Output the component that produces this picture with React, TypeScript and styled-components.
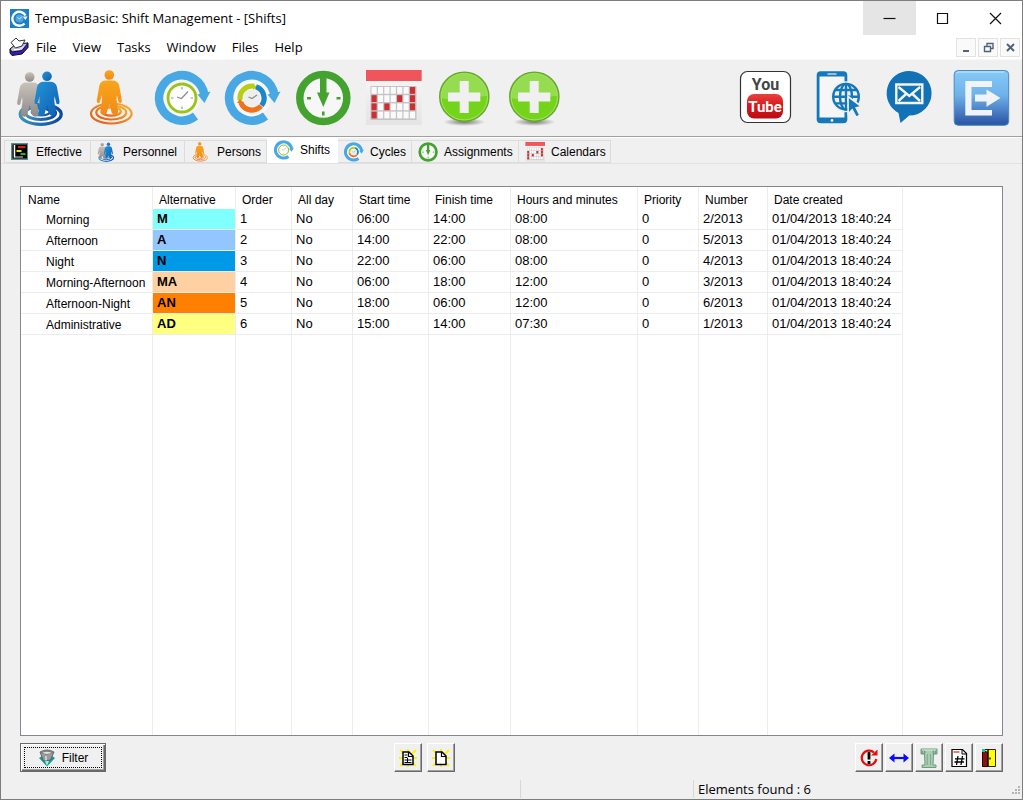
import React, { useState } from "react";
import styled, { createGlobalStyle, css } from "styled-components";

const UI = `"Open Sans", "Noto Sans", sans-serif`;
const CLASSIC = `"Liberation Sans", Arial, sans-serif`;
const FACE = "#f0f0f0";

const GlobalStyle = createGlobalStyle`
  *, *::before, *::after { box-sizing: border-box; }
  body { margin: 0; background: ${FACE}; color: #000; }
  button { margin: 0; padding: 0; border: 0; background: none; color: inherit; font: inherit; }
  svg { display: block; flex: none; }
`;

/* ---------- Drawings ---------- */

type IconProps = { size?: number };

/* Small copies are cropped closer so that they fill their slot. */
const Art = ({ size = 60, box, children }: IconProps & { box?: string; children: React.ReactNode }) => (
  <svg width={size} height={size} viewBox={box ?? (size < 60 ? "3 2 56 56" : "0 0 60 60")} fill="none" aria-hidden="true">
    {children}
  </svg>
);

const BODY =
  "M-3 5.5h6Q9 5.500 10 11L12.500 25q.2 4-3 2.500L7.600 20 7.200 24 9 38Q5 41.500 2.500 38L0 28-2.500 38Q-5 41.500-9 38L-7.200 24-7.600 20-9.500 27.500q-3.200 1.500-3-2.500L-10 11Q-9 5.500-3 5.500z";

const Person = ({ x, y, fill }: { x: number; y: number; fill: string }) => (
  <g transform={`translate(${x} ${y})`} fill={fill}>
    <circle r="4.800" />
    <path d={BODY} />
  </g>
);

const PeopleIcon = ({ size }: IconProps) => (
  <Art size={size}>
    <defs>
      <linearGradient id="rippleBlue" x1="0" x2="1">
        <stop offset="0" stopColor="#3f93b8" />
        <stop offset="1" stopColor="#0b46a0" />
      </linearGradient>
      <linearGradient id="bodyBlue" x1="0" x2="1" y2="1">
        <stop offset="0" stopColor="#2494d6" />
        <stop offset="1" stopColor="#0d5fb4" />
      </linearGradient>
      <linearGradient id="bodyGrey" x1="0" x2="0" y2="1">
        <stop offset="0" stopColor="#c9c2bb" />
        <stop offset="1" stopColor="#8f8a88" />
      </linearGradient>
    </defs>
    <ellipse cx="28.700" cy="46.300" rx="20.500" ry="10" fill="#fff" stroke="url(#rippleBlue)" strokeWidth="3.200" />
    <ellipse cx="28.700" cy="45" rx="15" ry="6.500" stroke="url(#rippleBlue)" strokeWidth="2.800" />
    <ellipse cx="28.700" cy="44" rx="9" ry="3.500" stroke="url(#rippleBlue)" strokeWidth="2.200" />
    <Person x={17.7} y={9} fill="url(#bodyGrey)" />
    <Person x={35} y={8.3} fill="url(#bodyBlue)" />
  </Art>
);

const PersonIcon = ({ size }: IconProps) => (
  <Art size={size}>
    <defs>
      <linearGradient id="rippleOrange" x1="0" x2="1" y1="1" y2="0">
        <stop offset="0" stopColor="#e0571c" />
        <stop offset="1" stopColor="#f9b233" />
      </linearGradient>
      <linearGradient id="bodyOrange" x1="0" x2="0" y2="1">
        <stop offset="0" stopColor="#f9a51c" />
        <stop offset="1" stopColor="#f08a18" />
      </linearGradient>
    </defs>
    <ellipse cx="29.300" cy="45.500" rx="20.300" ry="10" fill="#fbf3ea" stroke="url(#rippleOrange)" strokeWidth="2.200" />
    <ellipse cx="29.300" cy="44.500" rx="15" ry="7" stroke="url(#rippleOrange)" strokeWidth="2.200" />
    <ellipse cx="29.300" cy="43.500" rx="9.500" ry="4.200" stroke="url(#rippleOrange)" strokeWidth="2.200" />
    <Person x={27.3} y={7} fill="url(#bodyOrange)" />
  </Art>
);

const SweepArrow = () => (
  <>
    <path d="M43.500 48A22.700 22.700 0 1 1 52.300 27" stroke="#48a8e4" strokeWidth="8.500" />
    <path d="M45.500 26.500L58.500 23.500 52.500 35z" fill="#48a8e4" />
  </>
);

const ShiftIcon = ({ size }: IconProps) => (
  <Art size={size}>
    <circle cx="30" cy="30" r="18.500" fill="#f7f7f7" />
    <SweepArrow />
    <circle cx="30" cy="30" r="14" fill="#fff" stroke="#9bc31a" strokeWidth="2.800" />
    <path d="M36 23.500l-6.500 7-4.500-1.500" stroke="#8c8c8c" strokeWidth="1.300" />
    <path d="M30 19v2.500M30 38.500V41M19 30h2.500M38.500 30H41" stroke="#999" strokeWidth="1.200" />
  </Art>
);

const CycleIcon = ({ size }: IconProps) => (
  <Art size={size}>
    <circle cx="30" cy="30" r="18.500" fill="#f9f9f9" />
    <SweepArrow />
    <path d="M18.200 32A12 12 0 0 1 32 18.200" stroke="#b6cf16" strokeWidth="5.200" />
    <path d="M31 15.500l4 3.500-4 3z" fill="#b6cf16" />
    <path d="M34 18.700A12 12 0 0 1 39.500 37.500" stroke="#1c86c8" strokeWidth="5.200" />
    <path d="M39 37.900A12 12 0 0 1 18.800 34.500" stroke="#f0711e" strokeWidth="5.200" />
    <path d="M15 35l3-4 4 4z" fill="#f0711e" />
    <circle cx="30" cy="30" r="8.500" fill="#eee" />
    <path d="M35 27l-5 3.500-3.500-1.500" stroke="#8c8c8c" strokeWidth="1.200" />
  </Art>
);

const AssignmentIcon = ({ size }: IconProps) => (
  <Art size={size}>
    <circle cx="31.300" cy="30" r="23.500" fill="#f7f7f7" stroke="#43a32e" strokeWidth="7.500" />
    <path d="M28 5h6.500v19.500H37.500L31.300 39 25 24.500H28z" fill="#43a32e" />
    <path d="M15 30.300h4M44.500 30.300h4M31.300 43.500v4" stroke="#43a32e" strokeWidth="2.600" />
  </Art>
);

const BUSY = ["6-0", "0-1", "4-1", "6-1", "0-2", "2-2", "6-2", "0-3"];

const CalendarIcon = ({ size }: IconProps) => (
  <Art size={size}>
    <defs>
      <linearGradient id="sheet" x1="0" x2="0" y2="1">
        <stop offset="0" stopColor="#f8f8f8" />
        <stop offset="1" stopColor="#e4e4e4" />
      </linearGradient>
    </defs>
    <path d="M4 2h55.700v55H4z" fill="url(#sheet)" />
    <path d="M4 2h55.700v11H4z" fill="#f0555c" />
    <path d="M8.500 18h46v34H8.500z" fill="#c3c3c3" />
    {Array.from({ length: 28 }, (_, i) => {
      const col = i % 7;
      const row = Math.floor(i / 7);
      return (
        <rect
          key={i}
          x={9.5 + col * 6.4}
          y={19 + row * 8.2}
          width="5.200"
          height="6.800"
          fill={BUSY.includes(`${col}-${row}`) ? "#cf2f33" : "#fafafa"}
        />
      );
    })}
  </Art>
);

const AddIcon = ({ size }: IconProps) => (
  <Art size={size}>
    <defs>
      <radialGradient id="addShadow">
        <stop offset="0" stopColor="#777" />
        <stop offset="1" stopColor="#777" stopOpacity="0" />
      </radialGradient>
    </defs>
    <ellipse cx="32.300" cy="54" rx="21" ry="4" fill="url(#addShadow)" />
    <circle cx="32.300" cy="28.700" r="24.600" fill="#74d41c" stroke="#6aa534" strokeWidth="1.400" />
    <path d="M9 30A23.300 23.300 0 0 1 55.600 28Q46 28 38 31.500T9 30z" fill="#95dc50" />
    <circle cx="32.300" cy="28.700" r="23.200" stroke="#a3e463" strokeWidth="1" />
    <path d="M27.700 13h9v11.500h11.600v9H36.700V45h-9V33.500H16v-9h11.700z" fill="#f0f0f0" />
  </Art>
);

const LogoText = styled.text`
  font-family: Roboto, "Liberation Sans", sans-serif;
  font-weight: 700;
  text-anchor: middle;
`;

const YouTubeIcon = ({ size }: IconProps) => (
  <Art size={size}>
    <defs>
      <linearGradient id="tube" x1="0" x2="0" y2="1">
        <stop offset="0" stopColor="#e8423f" />
        <stop offset=".5" stopColor="#d8161a" />
        <stop offset="1" stopColor="#b80d12" />
      </linearGradient>
    </defs>
    <rect x="5.500" y="3.500" width="50" height="51" rx="7" fill="#fff" stroke="#333" strokeWidth="1.200" />
    <rect x="12" y="26" width="36" height="24.500" rx="7" fill="url(#tube)" />
    <LogoText x="30.500" y="22" fontSize="16" fill="#444">You</LogoText>
    <LogoText x="30" y="44" fontSize="15" fill="#fff">Tube</LogoText>
  </Art>
);

const MobileIcon = ({ size }: IconProps) => (
  <Art size={size}>
    <rect x="9.700" y="3.300" width="30.600" height="52" rx="4" fill="#1478bb" />
    <path d="M12.500 8.500h25v41h-25z" fill="#f6f6f6" />
    <path d="M20.500 6h9" stroke="#f0f0f0" strokeWidth="1.200" />
    <circle cx="25" cy="52.500" r="1.400" fill="#f0f0f0" />
    <circle cx="39" cy="28.700" r="15.500" fill="#f0f0f0" />
    <g stroke="#1478bb" strokeWidth="2.400">
      <circle cx="39" cy="28.700" r="12.800" />
      <ellipse cx="39" cy="28.700" rx="6" ry="12.800" />
      <path d="M39 16v25M26 28.700h26M28.500 22h21M28.500 35.400h21" />
    </g>
    <path d="M41 28.500l13.500 10-5.300 1.300 3.800 7.500-3.800 2-4-7.500-4 4z" fill="#1478bb" stroke="#f0f0f0" strokeWidth="1.600" />
  </Art>
);

const MailIcon = ({ size }: IconProps) => (
  <Art size={size}>
    <path d="M30.300 3a22.300 22.300 0 1 1 0 44.600L21.500 55 19.500 45A22.300 22.300 0 0 1 30.300 3z" fill="#1172b6" />
    <path d="M17.300 16.500h26v18.500h-26z" stroke="#f4f4f4" strokeWidth="2.400" />
    <path d="M19.500 19l10.800 9 10.800-9M19.500 33l7.500-7M41 33l-7.500-7" stroke="#f4f4f4" strokeWidth="2.400" />
  </Art>
);

const ExitIcon = ({ size }: IconProps) => (
  <Art size={size}>
    <defs>
      <linearGradient id="exitFill" x1="0" x2="0" y2="1">
        <stop offset="0" stopColor="#86caf8" />
        <stop offset=".45" stopColor="#6fb2ea" />
        <stop offset="1" stopColor="#2a51a3" />
      </linearGradient>
    </defs>
    <rect x="3.200" y="2.500" width="54.500" height="54.800" rx="4" fill="url(#exitFill)" stroke="#4a87c4" strokeWidth="1" />
    <path d="M5.500 5.500Q5.500 4 8 4h45" stroke="#c6e6fb" strokeWidth="1" />
    <path d="M14.300 13H41v6H20.500v23H41v5.500H14.300z" fill="#f0f3f8" />
    <path d="M24 26.500h11.500v-5L49.500 30l-14 8.700v-5.200H24z" fill="#f0f3f8" />
  </Art>
);

const EffectiveIcon = ({ size }: IconProps) => (
  <Art size={size} box="0 0 20 20">
    <path d="M1 1h17v17H1z" fill="#5d8a8a" />
    <path d="M2.500 2.500H17v14H2.500z" fill="#000" />
    <path d="M4.500 3v12.500" stroke="#fff" strokeWidth="1.500" />
    <path d="M8 5h7.500" stroke="#e01818" strokeWidth="2" />
    <path d="M6.500 9h5" stroke="#e8e020" strokeWidth="2" />
    <path d="M10.500 12h5" stroke="#20b040" strokeWidth="2" />
    <path d="M4 15h9" stroke="#ddd" strokeWidth="1" />
  </Art>
);

const AppLogo = () => (
  <Art size={19} box="0 0 19 19">
    <path d="M0 0h19v19H0z" fill="#1a7fc6" />
    <path d="M14.500 14.500A7 7 0 1 1 15.500 6.500" stroke="#fff" strokeWidth="2.400" />
    <path d="M12.500 7.500h5l-2 3.500z" fill="#fff" />
    <circle cx="9.500" cy="9.500" r="4" fill="#4fa6dc" />
    <path d="M7.500 8.500l2 1.500 2.500-2.500" stroke="#d4ecfa" />
  </Art>
);

const DocumentLogo = () => (
  <Art size={20} box="0 0 20 20">
    <path d="M1 12l8-3 10-3v4.500L13 17 3 18.500 1 16z" fill="#3a1cc0" stroke="#111" />
    <path d="M1 12l6-5 12-1-6 7.500L3 15z" fill="#b9c4e6" stroke="#111" />
    <path d="M2 5.500L7 1l3 3 6-1-3 6-6.500 2z" fill="#fff" stroke="#333" />
    <path d="M5 12.500h6l3-3" stroke="#fff" />
  </Art>
);

const FilterIcon = () => (
  <Art size={18} box="0 0 18 18">
    <path d="M1 9l8 8.500L17 9l-3-2H4z" fill="#149a9a" />
    <path d="M7 12h4l-2 5z" fill="#9df0e8" />
    <path d="M2 3q7-4 14 0l-3.500 8-7 1z" fill="#9b9b9b" stroke="#555" strokeWidth=".8" />
    <path d="M3 4q6-3.500 12 0-6 3-12 0z" fill="#e2e2e2" stroke="#666" strokeWidth=".7" />
    <path d="M8 7v4.500" stroke="#ddd" strokeWidth="1.500" />
  </Art>
);

const NewIcon = ({ lined }: { lined?: boolean }) => (
  <Art size={20} box="0 0 20 20">
    <path d="M2 2l16 16M18 2L2 18M10 1v18M1 10h18" stroke="#fff200" strokeWidth="2" />
    <path d="M5 4h6l4 4v8.500H5z" fill="#fff" stroke="#000" strokeWidth="1.500" />
    <path d="M10.500 4v4.500H15" stroke="#000" strokeWidth="1.200" />
    {lined && <path d="M6.500 7h3M6.500 9.500h3M6.500 12h7M6.500 14.500h7M9.500 10v4" stroke="#000" />}
  </Art>
);

const RefreshIcon = () => (
  <Art size={20} box="0 0 20 20">
    <path d="M15 4.500A7.300 7.300 0 1 0 17.300 11" stroke="#e80c0c" strokeWidth="2.200" />
    <path d="M12 7.500h6.500V1.500z" fill="#e80c0c" />
    <path d="M10 4v7.500M10 13v3" stroke="#000" strokeWidth="2.800" />
  </Art>
);

const ResizeIcon = () => (
  <Art size={20} box="0 0 20 20">
    <path d="M3 10h14" stroke="#0a0aff" strokeWidth="2.200" />
    <path d="M0 10l5.500-4.500v9zM20 10l-5.500-4.500v9z" fill="#0a0aff" />
  </Art>
);

const ColumnIcon = () => (
  <Art size={20} box="0 0 20 20">
    <path d="M2 1h16v5h-3.500L14 17h3v2.500H3V17h3L5.500 6H2z" fill="#a9cdb2" stroke="#6f9a7c" />
    <path d="M8.300 6v11M11.500 6v11" stroke="#7fab8b" />
    <circle cx="4.500" cy="4" r="1.500" stroke="#5e8a6b" />
    <circle cx="15.500" cy="4" r="1.500" stroke="#5e8a6b" />
    <path d="M3 2h14" stroke="#d9eedd" />
  </Art>
);

const NumberIcon = () => (
  <Art size={20} box="0 0 20 20">
    <path d="M3 1.500h10.500l4 4v13H3z" fill="#fff" stroke="#000" strokeWidth="1.200" />
    <path d="M13 1.500V6h4.500" stroke="#000" />
    <path d="M4.500 4h6" stroke="#e02020" strokeWidth="1.200" />
    <path d="M9 8L7.500 17M13.500 8L12 17M6 10.800h9.500M5.500 14h9.500" stroke="#000" strokeWidth="1.300" />
  </Art>
);

const DoorIcon = () => (
  <Art size={20} box="0 0 20 20">
    <path d="M3.500 1.500h13v17h-13z" fill="#ff0" stroke="#222" />
    <path d="M3.500 1.500l5 3v14h-5z" fill="#8c1010" stroke="#300" />
    <path d="M9 2v16.500" stroke="#000" strokeWidth="1.500" />
    <path d="M11 9.500v2" stroke="#222" strokeWidth="1.500" />
    <path d="M3 1h3v3H3z" fill="#17c4c4" />
  </Art>
);

const CaptionGlyph = ({ kind }: { kind: "min" | "max" | "close" }) => (
  <svg width="13" height="13" viewBox="0 0 13 13" fill="none" stroke="#111" strokeWidth="1.200" aria-hidden="true">
    {kind === "min" && <path d="M.5 6.500h12" />}
    {kind === "max" && <path d="M1.500 1.500h10v10h-10z" />}
    {kind === "close" && <path d="M1 1l11 11M12 1L1 12" />}
  </svg>
);

const MdiGlyph = ({ kind }: { kind: "min" | "restore" | "close" }) => (
  <svg width="11" height="11" viewBox="0 0 11 11" fill="none" stroke="#4f6478" strokeWidth="1.400" aria-hidden="true">
    {kind === "min" && <path d="M2 9h6" strokeWidth="2" />}
    {kind === "restore" && <path d="M4 4V1.500h6v5H7.500M1.500 4.500h6v5h-6z" />}
    {kind === "close" && <path d="M2 2l7 7M9 2L2 9" strokeWidth="2" />}
  </svg>
);

const SizeGrip = () => (
  <svg width="12" height="16" viewBox="0 0 12 16" fill="#b4b4b4" aria-hidden="true">
    <path d="M8 5h2v2H8zM5 8h2v2H5zM8 8h2v2H8zM2 11h2v2H2zM5 11h2v2H5zM8 11h2v2H8z" />
  </svg>
);

/* ---------- Window frame ---------- */

const Window = styled.div`
  display: flex;
  flex-direction: column;
  min-height: 100vh;
  border: 1px solid #7d7d7d;
  background: ${FACE};
  font: 12px/16px ${CLASSIC};
`;

const TitleBar = styled.header`
  display: flex;
  align-items: center;
  height: 34px;
  padding-left: 9px;
  gap: 6px;
  background: #fff;
`;

const Title = styled.h1`
  flex: 1;
  margin: 0;
  font: 400 13px/18px ${UI};
  white-space: nowrap;
`;

const CaptionButtons = styled.div`
  display: flex;
`;

const CaptionButton = styled.button<{ $lit?: boolean }>`
  display: flex;
  align-items: center;
  justify-content: center;
  width: 53px;
  height: 34px;
  background: ${(p) => (p.$lit ? "#e5e5e5" : "transparent")};
`;

const MenuBar = styled.nav`
  display: flex;
  align-items: center;
  height: 24px;
  padding: 0 2px 0 8px;
  background: #fff;
  font: 13px/18px ${UI};
`;

const MenuItems = styled.div`
  display: flex;
  flex: 1;
  gap: 16px;
  padding-left: 7px;
`;

const MdiButtons = styled.div`
  display: flex;
  gap: 2px;
`;

const MdiButton = styled.button`
  display: flex;
  align-items: center;
  justify-content: center;
  width: 20px;
  height: 19px;
  border: 1px solid #e2e2e2;
  background: #fafafa;
`;

/* ---------- Tool bar ---------- */

const ToolBar = styled.div`
  display: flex;
  justify-content: space-between;
  height: 78px;
  padding: 8px 5px 0 6px;
  border-top: 1px solid #f8f8f8;
  border-bottom: 1px solid #a0a0a0;
`;

const ToolGroup = styled.div`
  display: flex;
`;

const ToolButton = styled.button<{ $wide?: boolean }>`
  display: flex;
  justify-content: center;
  align-items: flex-start;
  width: ${(p) => (p.$wide ? 72 : 70)}px;
`;

/* ---------- Tabs ---------- */

const TabList = styled.div`
  display: flex;
  align-items: flex-end;
  height: 27px;
  padding-left: 3px;
  border-top: 1px solid #fff;
  border-bottom: 1px solid #e2e2e2;
`;

const Tab = styled.button<{ $width: number; $active: boolean }>`
  display: flex;
  align-items: center;
  gap: 6px;
  width: ${(p) => p.$width}px;
  height: 23px;
  padding-left: 6px;
  border: 1px solid #dcdcdc;
  border-left-width: 0;
  white-space: nowrap;
  &:first-child { border-left-width: 1px; padding-left: 5px; }
  ${(p) =>
    p.$active &&
    css`
      height: 26px;
      padding-left: 7px;
      padding-bottom: 1px;
      border-color: #fff;
      background: #fff;
    `}
`;

/* ---------- List ---------- */

const Content = styled.main`
  display: flex;
  flex: 1;
  flex-direction: column;
  padding: 22px 19px 0;
`;

const ListPanel = styled.div`
  display: flex;
  flex: 1;
  overflow-x: auto;
  border: 1px solid #828790;
  background: #fff;
`;

const ListTable = styled.table`
  flex: none;
  width: 882px;
  table-layout: fixed;
  border-collapse: separate;
  border-spacing: 0;
`;

const HeadCell = styled.th`
  height: 22px;
  padding: 3px 0 0 6px;
  border-right: 1px solid #ececec;
  font-weight: 400;
  text-align: left;
  white-space: nowrap;
  &:first-child { padding-left: 7px; }
`;

const Cell = styled.td<{ $fill?: string }>`
  height: 21px;
  padding: 0 0 0 4px;
  border-right: 1px solid #ececec;
  border-bottom: 1px solid #ececec;
  background: ${(p) => p.$fill ?? "transparent"};
  font-size: 13px;
  font-weight: ${(p) => (p.$fill ? 700 : 400)};
  white-space: nowrap;
`;

const NameCell = styled(Cell)`
  padding: 2px 0 0 25px;
  font-size: 12px;
`;

const FillerCell = styled.td`
  padding: 0;
  border-right: 1px solid #ececec;
`;

/* ---------- Bottom bars ---------- */

const ActionBar = styled.div`
  display: grid;
  grid-template-columns: 374px auto 1fr;
  align-items: center;
  height: 43px;
`;

const ActionGroup = styled.div<{ $gap: number; $end?: boolean }>`
  display: flex;
  gap: ${(p) => p.$gap}px;
  justify-content: ${(p) => (p.$end ? "flex-end" : "flex-start")};
`;

const RaisedButton = styled.button`
  display: flex;
  align-items: center;
  justify-content: center;
  width: 28px;
  height: 29px;
  border: 1px solid;
  border-color: #fff #696969 #696969 #fff;
  box-shadow: inset -1px -1px #a0a0a0;
`;

const FilterButton = styled(RaisedButton)`
  width: 86px;
  padding: 3px;
  border-color: #696969;
  box-shadow: inset 1px 1px #fff, inset -1px -1px #696969, inset -2px -2px #a0a0a0;
`;

const FocusFrame = styled.span`
  display: flex;
  flex: 1;
  align-items: center;
  justify-content: center;
  gap: 6px;
  height: 21px;
  border: 1px dotted #000;
`;

const StatusBar = styled.footer`
  display: grid;
  grid-template-columns: 519px 173px 1fr auto;
  align-items: center;
  height: 20px;
  font: 13px/18px ${UI};
`;

const StatusPane = styled.div`
  height: 18px;
  padding-left: 4px;
  border-left: 1px solid #d7d7d7;
  &:first-child { border-left: 0; }
`;

/* ---------- Data ---------- */

const MENUS = ["File", "View", "Tasks", "Window", "Files", "Help"];

const TOOLS = [
  { label: "Personnel", Icon: PeopleIcon },
  { label: "Persons", Icon: PersonIcon },
  { label: "Shifts", Icon: ShiftIcon },
  { label: "Cycles", Icon: CycleIcon },
  { label: "Assignments", Icon: AssignmentIcon },
  { label: "Calendars", Icon: CalendarIcon },
  { label: "Add shift", Icon: AddIcon },
  { label: "Add cycle", Icon: AddIcon },
];

const LINKS = [
  { label: "YouTube", Icon: YouTubeIcon },
  { label: "Mobile", Icon: MobileIcon },
  { label: "Contact", Icon: MailIcon },
  { label: "Exit", Icon: ExitIcon },
];

const TABS = [
  { label: "Effective", Icon: EffectiveIcon, width: 87 },
  { label: "Personnel", Icon: PeopleIcon, width: 94 },
  { label: "Persons", Icon: PersonIcon, width: 82 },
  { label: "Shifts", Icon: ShiftIcon, width: 71 },
  { label: "Cycles", Icon: CycleIcon, width: 74 },
  { label: "Assignments", Icon: AssignmentIcon, width: 107 },
  { label: "Calendars", Icon: CalendarIcon, width: 92 },
];

const COLUMNS = [
  { label: "Name", width: 132 },
  { label: "Alternative", width: 83 },
  { label: "Order", width: 56 },
  { label: "All day", width: 61 },
  { label: "Start time", width: 76 },
  { label: "Finish time", width: 82 },
  { label: "Hours and minutes", width: 127 },
  { label: "Priority", width: 61 },
  { label: "Number", width: 69 },
  { label: "Date created", width: 135 },
];

const SHIFTS = [
  { name: "Morning", code: "M", fill: "#80ffff", start: "06:00", finish: "14:00", hours: "08:00", number: "2/2013" },
  { name: "Afternoon", code: "A", fill: "#93c6ff", start: "14:00", finish: "22:00", hours: "08:00", number: "5/2013" },
  { name: "Night", code: "N", fill: "#0099e8", start: "22:00", finish: "06:00", hours: "08:00", number: "4/2013" },
  { name: "Morning-Afternoon", code: "MA", fill: "#ffd0a2", start: "06:00", finish: "18:00", hours: "12:00", number: "3/2013" },
  { name: "Afternoon-Night", code: "AN", fill: "#ff8000", start: "18:00", finish: "06:00", hours: "12:00", number: "6/2013" },
  { name: "Administrative", code: "AD", fill: "#ffff80", start: "15:00", finish: "14:00", hours: "07:30", number: "1/2013" },
];

const ACTIONS = [
  { label: "Refresh", Icon: RefreshIcon },
  { label: "Fit columns", Icon: ResizeIcon },
  { label: "Columns", Icon: ColumnIcon },
  { label: "Count", Icon: NumberIcon },
  { label: "Close", Icon: DoorIcon },
];

export default function App() {
  const [tab, setTab] = useState("Shifts");

  return (
    <>
      <GlobalStyle />
      <Window>
        <TitleBar>
          <AppLogo />
          <Title>TempusBasic: Shift Management - [Shifts]</Title>
          <CaptionButtons>
            <CaptionButton type="button" aria-label="Minimize" $lit><CaptionGlyph kind="min" /></CaptionButton>
            <CaptionButton type="button" aria-label="Maximize"><CaptionGlyph kind="max" /></CaptionButton>
            <CaptionButton type="button" aria-label="Close"><CaptionGlyph kind="close" /></CaptionButton>
          </CaptionButtons>
        </TitleBar>

        <MenuBar aria-label="Main menu">
          <DocumentLogo />
          <MenuItems>
            {MENUS.map((m) => (
              <button key={m} type="button">{m}</button>
            ))}
          </MenuItems>
          <MdiButtons>
            <MdiButton type="button" aria-label="Minimize document"><MdiGlyph kind="min" /></MdiButton>
            <MdiButton type="button" aria-label="Restore document"><MdiGlyph kind="restore" /></MdiButton>
            <MdiButton type="button" aria-label="Close document"><MdiGlyph kind="close" /></MdiButton>
          </MdiButtons>
        </MenuBar>

        <ToolBar role="toolbar" aria-label="Tools">
          <ToolGroup>
            {TOOLS.map(({ label, Icon }) => (
              <ToolButton key={label} type="button" aria-label={label}><Icon /></ToolButton>
            ))}
          </ToolGroup>
          <ToolGroup>
            {LINKS.map(({ label, Icon }) => (
              <ToolButton key={label} type="button" aria-label={label} $wide><Icon /></ToolButton>
            ))}
          </ToolGroup>
        </ToolBar>

        <TabList role="tablist">
          {TABS.map(({ label, Icon, width }) => (
            <Tab
              key={label}
              type="button"
              role="tab"
              aria-selected={tab === label}
              $active={tab === label}
              $width={width}
              onClick={() => setTab(label)}
            >
              <Icon size={20} />
              {label}
            </Tab>
          ))}
        </TabList>

        <Content>
          <ListPanel>
            <ListTable>
              <colgroup>
                {COLUMNS.map((c) => (
                  <col key={c.label} width={c.width} />
                ))}
              </colgroup>
              <thead>
                <tr>
                  {COLUMNS.map((c) => (
                    <HeadCell key={c.label} scope="col">{c.label}</HeadCell>
                  ))}
                </tr>
              </thead>
              <tbody>
                {SHIFTS.map((s, i) => (
                  <tr key={s.name}>
                    <NameCell>{s.name}</NameCell>
                    <Cell $fill={s.fill}>{s.code}</Cell>
                    <Cell>{i + 1}</Cell>
                    <Cell>No</Cell>
                    <Cell>{s.start}</Cell>
                    <Cell>{s.finish}</Cell>
                    <Cell>{s.hours}</Cell>
                    <Cell>0</Cell>
                    <Cell>{s.number}</Cell>
                    <Cell>01/04/2013 18:40:24</Cell>
                  </tr>
                ))}
                <tr aria-hidden="true">
                  {COLUMNS.map((c) => (
                    <FillerCell key={c.label} />
                  ))}
                </tr>
              </tbody>
            </ListTable>
          </ListPanel>

          <ActionBar>
            <FilterButton type="button">
              <FocusFrame><FilterIcon />Filter</FocusFrame>
            </FilterButton>
            <ActionGroup $gap={5}>
              <RaisedButton type="button" aria-label="New from template"><NewIcon lined /></RaisedButton>
              <RaisedButton type="button" aria-label="New"><NewIcon /></RaisedButton>
            </ActionGroup>
            <ActionGroup $gap={2} $end>
              {ACTIONS.map(({ label, Icon }) => (
                <RaisedButton key={label} type="button" aria-label={label}><Icon /></RaisedButton>
              ))}
            </ActionGroup>
          </ActionBar>
        </Content>

        <StatusBar>
          <StatusPane />
          <StatusPane />
          <StatusPane>Elements found : 6</StatusPane>
          <SizeGrip />
        </StatusBar>
      </Window>
    </>
  );
}
